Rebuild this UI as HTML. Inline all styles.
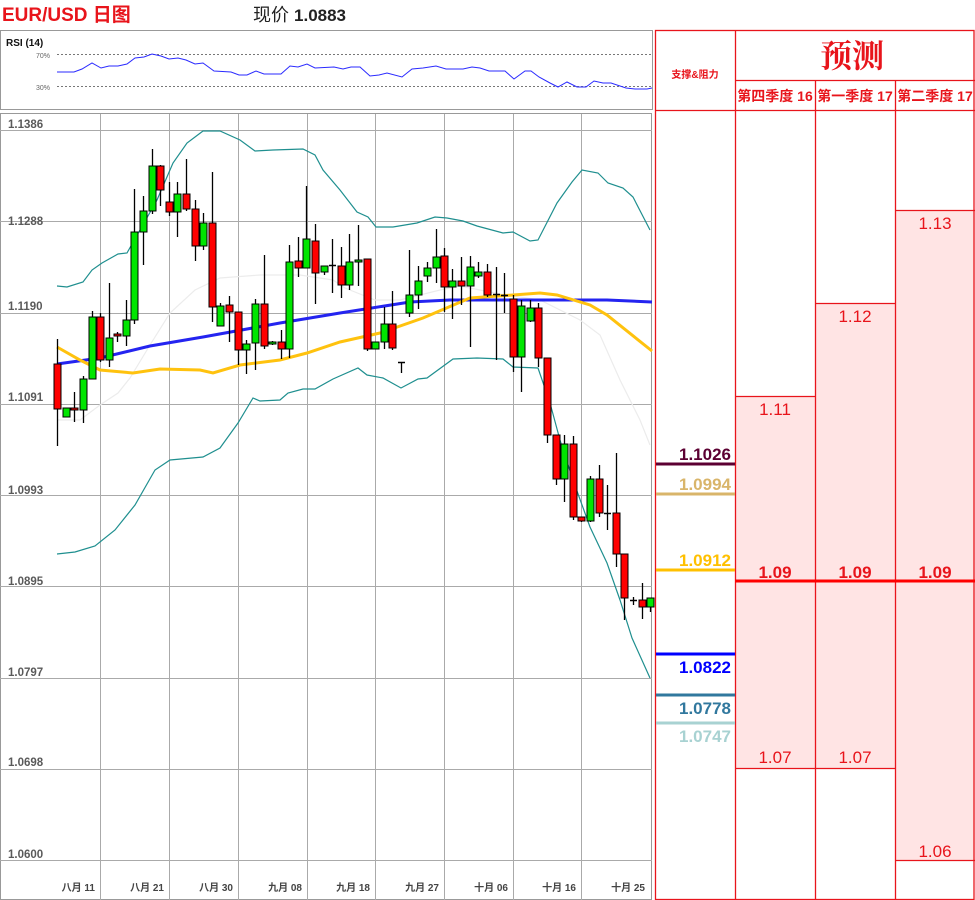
<!DOCTYPE html>
<html><head><meta charset="utf-8"><style>
html,body{margin:0;padding:0;background:#fff;width:975px;height:900px;overflow:hidden}
svg{display:block}
text{font-family:"Liberation Sans","Noto Sans CJK SC",sans-serif}
</style></head><body>
<svg id="s" width="975" height="900" xmlns="http://www.w3.org/2000/svg">
<text x="2" y="21" font-size="19" font-weight="bold" fill="#e8141b">EUR/USD 日图</text>
<text x="253" y="21" font-size="18" fill="#222">现价 <tspan font-weight="bold" font-size="17">1.0883</tspan></text>
<!-- RSI -->
<rect x="0.5" y="30.5" width="652" height="79" fill="#fff" stroke="#999"/>
<text x="6" y="46" font-size="10" font-weight="bold" fill="#111">RSI (14)</text>
<line x1="57" y1="54.5" x2="652" y2="54.5" stroke="#777" stroke-dasharray="2,2"/>
<line x1="57" y1="86.5" x2="652" y2="86.5" stroke="#777" stroke-dasharray="2,2"/>
<text x="50" y="58" font-size="7" fill="#666" text-anchor="end">70%</text>
<text x="50" y="90" font-size="7" fill="#666" text-anchor="end">30%</text>
<polyline fill="none" stroke="#2a2aff" stroke-width="1" points="57,72 74,72 82,69 92,63 101,68 109,66 118,66 127,64 135,58 144,57 152,54 161,56 169,59 178,58 186,60 195,64 203,63 214,71 231,72 239,75 247,75 256,71 264,74 281,74 290,66 298,67 307,64 315,68 334,67 343,69 351,67 360,67 370,76 379,75 387,73 402,77 412,69 423,68 436,66 446,69 455,69 463,69 472,67 480,68 489,71 505,71 514,79 525,71 531,71 539,77 550,83 558,87 567,82 577,87 586,87 594,81 603,83 611,83 626,88 635,89 647,89 652,88"/>
<!-- main chart -->
<rect x="0.5" y="113.5" width="651" height="786" fill="#fff" stroke="#999"/>
<g id="grid" stroke="#aaa" stroke-width="1"></g>
<g font-size="11.5" font-weight="bold" fill="#5a5a5a">
<text x="8" y="128">1.1386</text><text x="8" y="225">1.1288</text><text x="8" y="310">1.1190</text><text x="8" y="401">1.1091</text><text x="8" y="494">1.0993</text><text x="8" y="585">1.0895</text><text x="8" y="676">1.0797</text><text x="8" y="766">1.0698</text><text x="8" y="858">1.0600</text>
</g>
<g font-size="10" font-weight="bold" fill="#444" text-anchor="end">
<text x="95" y="891">八月 11</text><text x="164" y="891">八月 21</text><text x="233" y="891">八月 30</text><text x="302" y="891">九月 08</text><text x="370" y="891">九月 18</text><text x="439" y="891">九月 27</text><text x="508" y="891">十月 06</text><text x="576" y="891">十月 16</text><text x="645" y="891">十月 25</text>
</g>
<polyline fill="none" stroke="#ececec" stroke-width="1.2" points="57,420 80,420 100,405 118,393 130,378 150,345 170,313 195,290 220,278 260,275 300,275 333,280 345,288 375,300 400,300 440,290 460,286 500,294 540,300 580,320 600,335 620,380 640,420 650,445"/>
<polyline fill="none" stroke="#1f8f8f" stroke-width="1.2" points="57,286 67,287 83,282 92,270 102,263 118,254 127,253 140,230 157,200 173,163 187,143 203,131 220,131 240,140 255,151 273,150 303,149 315,155 323,170 340,190 357,212 368,217 376,227 393,227 417,223 435,217 447,218 463,221 477,226 503,233 513,232 530,241 538,240 557,203 572,182 582,170 598,173 608,183 623,188 633,197 650,230"/>
<polyline fill="none" stroke="#1f8f8f" stroke-width="1.2" points="57,554 75,552 95,546 115,530 135,505 155,470 170,460 203,457 220,448 238,423 253,398 260,401 280,400 288,393 303,389 315,389 333,379 358,368 367,375 383,378 401,388 418,379 427,378 453,359 477,358 503,359 513,367 538,368 550,403 560,440 573,480 590,527 607,563 620,600 632,638 650,678"/>
<polyline fill="none" stroke="#2424f0" stroke-width="3" points="57,364 100,358 150,346 203,337 280,323 340,313 410,302 450,300 513,300 607,300 652,302"/>
<polyline fill="none" stroke="#ffc20e" stroke-width="3" points="57,347 80,360 100,370 133,373 160,369 200,370 213,373 240,365 280,360 307,353 340,342 380,333 423,318 470,298 513,295 540,293 557,295 590,305 607,315 652,351"/>
<g id="candles"></g>
<!-- table -->
<rect x="735" y="396" width="80" height="372" fill="#ffe4e4"/>
<rect x="815" y="303" width="80" height="465" fill="#ffe4e4"/>
<rect x="895" y="210" width="80" height="650" fill="#ffe4e4"/>
<g stroke="#e8141b" stroke-width="1.3" fill="none">
<rect x="655.5" y="30.5" width="318.5" height="869"/>
<line x1="735.5" y1="30" x2="735.5" y2="900"/>
<line x1="815.5" y1="80" x2="815.5" y2="900"/>
<line x1="895.5" y1="80" x2="895.5" y2="900"/>
<line x1="735" y1="80.5" x2="975" y2="80.5"/>
<line x1="655" y1="110.5" x2="975" y2="110.5"/>
<line x1="735" y1="396.5" x2="815" y2="396.5"/>
<line x1="735" y1="768.5" x2="895" y2="768.5"/>
<line x1="815" y1="303.5" x2="895" y2="303.5"/>
<line x1="895" y1="210.5" x2="975" y2="210.5"/>
<line x1="895" y1="860.5" x2="975" y2="860.5"/>
</g>
<line x1="735" y1="581" x2="975" y2="581" stroke="#f00" stroke-width="3"/>
<text x="695" y="78" font-size="10" font-weight="bold" fill="#e8141b" text-anchor="middle">支撑&amp;阻力</text>
<text x="852" y="67" font-size="32" font-weight="bold" fill="#e8141b" text-anchor="middle" style="font-family:'Noto Serif CJK SC',serif">预测</text>
<g font-size="14" font-weight="bold" fill="#e8141b" text-anchor="middle">
<text x="775" y="101">第四季度 16</text><text x="855" y="101">第一季度 17</text><text x="935" y="101">第二季度 17</text>
</g>
<g font-size="17" fill="#e8141b" text-anchor="middle">
<text x="775" y="415">1.11</text><text x="855" y="322">1.12</text><text x="935" y="229">1.13</text>
<text x="775" y="763">1.07</text><text x="855" y="763">1.07</text><text x="935" y="857">1.06</text>
</g>
<g font-size="17" font-weight="bold" fill="#e8141b" text-anchor="middle">
<text x="775" y="578">1.09</text><text x="855" y="578">1.09</text><text x="935" y="578">1.09</text>
</g>
<g stroke-width="3">
<line x1="656" y1="464" x2="735" y2="464" stroke="#5c0032"/>
<line x1="656" y1="494" x2="735" y2="494" stroke="#d9b56a"/>
<line x1="656" y1="570" x2="735" y2="570" stroke="#ffc000"/>
<line x1="656" y1="654" x2="735" y2="654" stroke="#0000ff"/>
<line x1="656" y1="695" x2="735" y2="695" stroke="#31789e"/>
<line x1="656" y1="723" x2="735" y2="723" stroke="#a8d2d2"/>
</g>
<g font-size="17" font-weight="bold" text-anchor="end">
<text x="731" y="460" fill="#5c0032">1.1026</text>
<text x="731" y="490" fill="#d9b56a">1.0994</text>
<text x="731" y="566" fill="#ffc000">1.0912</text>
<text x="731" y="673" fill="#0000ff">1.0822</text>
<text x="731" y="714" fill="#31789e">1.0778</text>
<text x="731" y="742" fill="#a8d2d2">1.0747</text>
</g>
</svg>
<script>
var NS="http://www.w3.org/2000/svg";
function el(t,a,p){var e=document.createElementNS(NS,t);for(var k in a)e.setAttribute(k,a[k]);p.appendChild(e);return e;}
var g=document.getElementById("grid");
[130,221,313,404,495,586,678,769,860].forEach(function(y){el("line",{x1:0,x2:652,y1:y+.5,y2:y+.5},g);});
[100,169,238,307,375,444,513,581].forEach(function(x){el("line",{x1:x+.5,x2:x+.5,y1:114,y2:900},g);});
var C=[[57,364,409,339,446,'r'],[66,408,417,408,417,'g'],[74,408,410,392,422,'r'],[83,379,410,376,423,'g'],[92,317,379,311,379,'g'],[100,317,360,313,362,'r'],[109,338,360,283,367,'g'],[117,334,336,332,342,'r'],[126,320,336,300,346,'g'],[134,232,320,189,324,'g'],[143,211,232,196,265,'g'],[152,166,211,149,214,'g'],[160,166,190,165,206,'r'],[169,202,212,182,216,'r'],[177,194,212,182,237,'g'],[186,194,209,159,211,'r'],[195,209,246,200,261,'r'],[203,223,246,213,250,'g'],[212,223,307,172,322,'r'],[220,306,326,303,326,'g'],[229,305,312,296,342,'r'],[238,312,350,312,365,'r'],[246,344,350,340,374,'g'],[255,304,343,299,370,'g'],[264,304,346,255,349,'r'],[272,342,344,341,345,'g'],[281,342,349,330,359,'r'],[289,262,349,245,358,'g'],[298,261,268,237,277,'r'],[306,239,268,186,268,'g'],[315,241,273,224,304,'r'],[324,266,272,266,275,'g'],[332,265,266,239,293,'d'],[341,266,285,247,298,'r'],[349,262,285,234,290,'g'],[358,260,262,225,286,'g'],[367,259,349,259,351,'r'],[375,342,349,342,349,'g'],[384,324,342,307,349,'g'],[392,324,348,291,350,'r'],[401,362,363,362,373,'d'],[409,295,313,250,317,'g'],[418,281,295,266,309,'g'],[427,268,276,262,282,'g'],[436,257,268,229,283,'g'],[444,256,287,248,312,'r'],[452,281,287,269,319,'g'],[461,281,286,257,305,'r'],[470,267,286,256,347,'g'],[478,272,276,262,278,'g'],[487,272,295,264,297,'r'],[496,294,295,267,360,'d'],[504,295,296,273,313,'d'],[513,299,357,295,372,'r'],[521,306,357,300,392,'g'],[530,308,321,300,322,'g'],[538,308,358,303,367,'r'],[547,358,435,358,443,'r'],[556,435,479,435,485,'r'],[564,444,479,435,502,'g'],[573,444,517,436,520,'r'],[581,517,521,517,522,'r'],[590,479,521,476,522,'g'],[599,479,513,465,517,'r'],[607,513,514,485,530,'d'],[616,513,554,453,567,'r'],[624,554,598,554,620,'r'],[633,600,601,597,605,'d'],[642,600,607,583,619,'r'],[650,598,607,598,612,'g']];
var cg=document.getElementById("candles");
C.forEach(function(c){
 el("line",{x1:c[0]+.5,x2:c[0]+.5,y1:c[3],y2:c[4],stroke:"#000","stroke-width":1.3},cg);
 var h=Math.max(c[2]-c[1],1.5);
 if(c[5]=='d'){el("line",{x1:c[0]-3,x2:c[0]+4,y1:c[1]+.5,y2:c[1]+.5,stroke:"#000","stroke-width":1.5},cg);}
 else el("rect",{x:c[0]-3,y:c[1],width:7,height:h,fill:c[5]=='g'?"#00e600":"#f00",stroke:"#000","stroke-width":1},cg);
});
</script>
</body></html>
